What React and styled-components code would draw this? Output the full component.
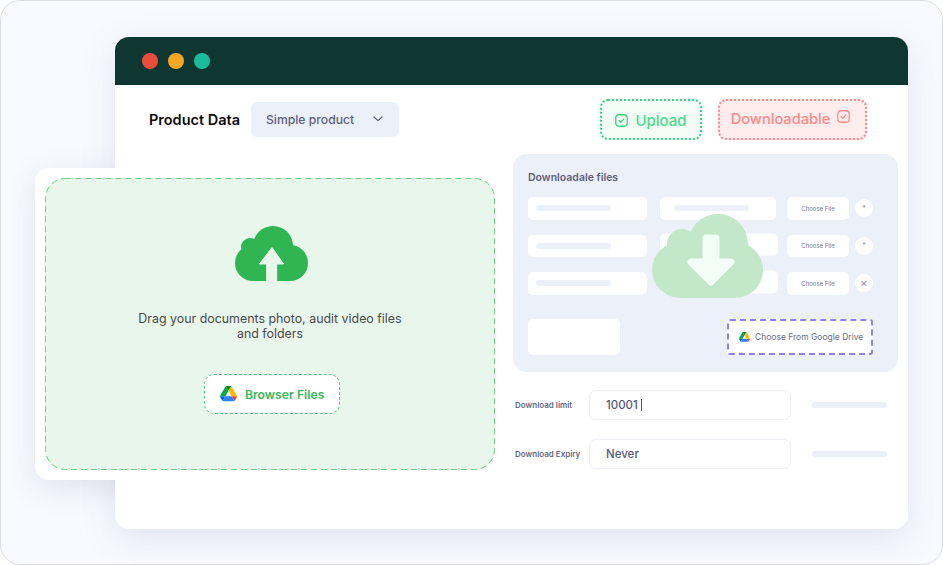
import React from "react";
import styled, { createGlobalStyle } from "styled-components";

const GlobalStyle = createGlobalStyle`
  html, body {
    margin: 0;
    padding: 0;
    background: #ffffff;
    overflow: hidden;
  }
  * {
    box-sizing: border-box;
  }
`;

function DriveIcon({ size }) {
  return (
    <svg width={size} viewBox="0 0 87.3 78" style={{ flexShrink: 0 }}>
      <path d="m6.6 66.85 3.85 6.65c.8 1.4 1.95 2.5 3.3 3.3l13.75-23.8h-27.5c0 1.55.4 3.1 1.2 4.5z" fill="#0066da" />
      <path d="m43.65 25-13.75-23.8c-1.35.8-2.5 1.9-3.3 3.3l-25.4 44a9.06 9.06 0 0 0 -1.2 4.5h27.5z" fill="#00ac47" />
      <path d="m73.55 76.8c1.35-.8 2.5-1.9 3.3-3.3l1.6-2.75 7.65-13.25c.8-1.4 1.2-2.95 1.2-4.5h-27.502l5.852 11.5z" fill="#ea4335" />
      <path d="m43.65 25 13.75-23.8c-1.35-.8-2.9-1.2-4.5-1.2h-18.5c-1.6 0-3.15.45-4.5 1.2z" fill="#00832d" />
      <path d="m59.8 53h-32.3l-13.75 23.8c1.35.8 2.9 1.2 4.5 1.2h50.8c1.6 0 3.15-.45 4.5-1.2z" fill="#2684fc" />
      <path d="m73.4 26.5-12.7-22c-.8-1.4-1.95-2.5-3.3-3.3l-13.75 23.8 16.15 28h27.45c0-1.55-.4-3.1-1.2-4.5z" fill="#ffba00" />
    </svg>
  );
}

function CheckBox({ color, raised }) {
  return (
    <svg
      width="13"
      height="13"
      viewBox="0 0 13 13"
      fill="none"
      style={{ flexShrink: 0, marginTop: raised ? -5 : 0 }}
    >
      <rect x="0.75" y="0.75" width="11.5" height="11.5" rx="3.2" stroke={color} strokeWidth="1.3" />
      <path d="M4 6.7l1.8 1.7L9 4.9" stroke={color} strokeWidth="1.2" strokeLinecap="round" strokeLinejoin="round" />
    </svg>
  );
}

function UploadCloud() {
  return (
    <svg width="73" height="55" viewBox="0 0 73 55" style={{ display: "block", marginLeft: 3 }}>
      <g fill="#2fb551">
        <circle cx="38" cy="20" r="20" />
        <circle cx="15" cy="21" r="9" />
        <circle cx="18" cy="37" r="18" />
        <circle cx="55" cy="37" r="18" />
        <rect x="18" y="20" width="37" height="35" />
      </g>
      <path d="M37 21.5L48.5 38H41.7V55H31.7V38H24.5Z" fill="#e9f6ec" stroke="#e9f6ec" strokeWidth="1" strokeLinejoin="round" />
    </svg>
  );
}

function DownloadCloud() {
  return (
    <svg width="111" height="84" viewBox="0 0 111 84" style={{ display: "block" }}>
      <g fill="#c2e7c9">
        <circle cx="66" cy="30" r="30" />
        <circle cx="30" cy="30" r="15" />
        <circle cx="28" cy="56" r="28" />
        <circle cx="83" cy="56" r="28" />
        <rect x="28" y="28" width="55" height="56" />
      </g>
      <path
        d="M54 24h10v24h15L59 68 39 48h15z"
        fill="#f3fcf6"
        stroke="#f3fcf6"
        strokeWidth="7"
        strokeLinejoin="round"
      />
    </svg>
  );
}

const rows = [
  { mark: "*" },
  { mark: "*", shifted: true },
  { mark: "×", shifted: true },
];

export default function App() {
  return (
    <>
      <GlobalStyle />
      <Frame>
        <Window>
          <TitleBar>
            <Dot $color="#ea4c3e" />
            <Dot $color="#f5a623" />
            <Dot $color="#1abc9c" />
          </TitleBar>
          <Body>
            <Toolbar>
              <ProductLabel>Product Data</ProductLabel>
              <Select>
                Simple product
                <svg width="10" height="6" viewBox="0 0 10 6" fill="none">
                  <path d="M1 1l4 3.6L9 1" stroke="#5e607c" strokeWidth="1.2" strokeLinecap="round" strokeLinejoin="round" />
                </svg>
              </Select>
              <Badges>
                <UploadBadge>
                  <CheckBox color="#3ed07f" />
                  Upload
                </UploadBadge>
                <DownloadBadge>
                  Downloadable
                  <CheckBox color="#ff8a8a" raised />
                </DownloadBadge>
              </Badges>
            </Toolbar>

            <Panel>
              <PanelTitle>Downloadale files</PanelTitle>
              <FileRows>
                {rows.map((row, i) => (
                  <FileRow key={i}>
                    <FileInput>
                      <Skeleton />
                    </FileInput>
                    <MiddleInput $shifted={row.shifted}>
                      <Skeleton />
                    </MiddleInput>
                    <ChooseFile>Choose File</ChooseFile>
                    <RoundButton $large={row.mark === "×"}>{row.mark}</RoundButton>
                  </FileRow>
                ))}
              </FileRows>
              <PanelFooter>
                <BlankCard />
                <DriveButton>
                  <DriveIcon size={11} />
                  Choose From Google Drive
                </DriveButton>
              </PanelFooter>
              <CloudOverlay>
                <DownloadCloud />
              </CloudOverlay>
            </Panel>

            <Fields>
              <FieldLabel>Download limit</FieldLabel>
              <FieldInput>
                10001
                <Caret />
              </FieldInput>
              <FieldBar />
              <FieldLabel>Download Expiry</FieldLabel>
              <FieldInput>Never</FieldInput>
              <FieldBar />
            </Fields>
          </Body>
        </Window>

        <DropCard>
          <DropZone>
            <DashedOutline width="450" height="292" viewBox="0 0 450 292" fill="none">
              <rect x="0.5" y="0.5" width="449" height="291" rx="20" stroke="#6fcf86" strokeWidth="1" strokeDasharray="6 4" />
            </DashedOutline>
            <UploadCloud />
            <DropText>
              Drag your documents photo, audit video files
              <br />
              and folders
            </DropText>
            <BrowseButton>
              <DriveIcon size={17} />
              Browser Files
            </BrowseButton>
          </DropZone>
        </DropCard>
      </Frame>
    </>
  );
}

const Frame = styled.div`
  position: relative;
  width: 943px;
  height: 565px;
  padding: 36px 34px 35px 114px;
  background: #f9faff;
  border: 1px solid #dcdfe6;
  border-radius: 20px;
  font-family: "Inter", "Liberation Sans", sans-serif;
`;

const Window = styled.div`
  width: 793px;
  height: 492px;
  background: #ffffff;
  border-radius: 14px;
  box-shadow: 0 10px 36px rgba(70, 80, 120, 0.13);
  overflow: hidden;
  display: flex;
  flex-direction: column;
`;

const TitleBar = styled.div`
  height: 48px;
  background: #0d3730;
  display: flex;
  align-items: center;
  gap: 10px;
  padding-left: 27px;
  flex-shrink: 0;
`;

const Dot = styled.span`
  width: 16px;
  height: 16px;
  border-radius: 50%;
  background: ${(p) => p.$color};
`;

const Body = styled.div`
  flex: 1;
  display: flex;
  flex-direction: column;
  padding: 14px 10px 0 34px;
`;

const Toolbar = styled.div`
  display: flex;
  align-items: center;
  height: 41px;
  padding-right: 31px;
`;

const ProductLabel = styled.div`
  font-size: 14.5px;
  font-weight: 600;
  color: #0b0b0f;
  width: 102px;
  white-space: nowrap;
`;

const Select = styled.div`
  width: 148px;
  height: 35px;
  margin-top: -1px;
  background: #ecf0f9;
  border-radius: 6px;
  display: flex;
  align-items: center;
  justify-content: space-between;
  padding: 0 16px 0 15px;
  font-size: 12.2px;
  font-weight: 500;
  color: #5e607c;
`;

const Badges = styled.div`
  margin-left: auto;
  display: flex;
  gap: 16px;
`;

const Badge = styled.div`
  height: 41px;
  display: flex;
  align-items: center;
  border-radius: 8px;
  font-weight: 500;
  white-space: nowrap;
`;

const UploadBadge = styled(Badge)`
  width: 102px;
  justify-content: center;
  gap: 7px;
  font-size: 15px;
  color: #4fd98c;
  background: #f3fcf6;
  border: 2px dotted #35d67d;
  padding-top: 1px;
`;

const DownloadBadge = styled(Badge)`
  width: 149px;
  justify-content: center;
  gap: 7px;
  font-size: 14.6px;
  color: #ff8a8a;
  background: #ffecec;
  border: 2px dotted #ff8585;
  padding-bottom: 1px;
  padding-right: 4px;
`;

const Panel = styled.div`
  position: relative;
  align-self: flex-end;
  width: 385px;
  height: 218px;
  margin-top: 14px;
  padding: 18px 25px 0 15px;
  background: #ecf0f9;
  border-radius: 14px;
`;

const PanelTitle = styled.div`
  font-size: 10.5px;
  line-height: 12px;
  font-weight: 600;
  color: #5e607c;
`;

const FileRows = styled.div`
  display: flex;
  flex-direction: column;
  gap: 15px;
  margin-top: 13px;
`;

const FileRow = styled.div`
  display: grid;
  grid-template-columns: 119px 114px 62px 18px;
  column-gap: 13px;
  height: 22.5px;
  align-items: center;
`;

const FileInput = styled.div`
  height: 22.5px;
  background: #ffffff;
  border-radius: 5px;
  display: flex;
  align-items: center;
  padding-left: 8px;
`;

const MiddleInput = styled(FileInput)`
  width: ${(p) => (p.$shifted ? "118px" : "116px")};
  transform: ${(p) => (p.$shifted ? "translateY(-1.5px)" : "none")};
  padding-left: 14px;
`;

const Skeleton = styled.span`
  width: 75px;
  height: 6px;
  border-radius: 3px;
  background: #ecf0f9;
`;

const ChooseFile = styled.div`
  height: 22.5px;
  background: #ffffff;
  border-radius: 5px;
  display: flex;
  align-items: center;
  justify-content: center;
  font-size: 6px;
  color: #77798f;
`;

const RoundButton = styled.div`
  width: 18px;
  height: 18px;
  margin-left: -7px;
  border-radius: 50%;
  background: #ffffff;
  display: flex;
  align-items: center;
  justify-content: center;
  font-size: ${(p) => (p.$large ? "11px" : "7px")};
  color: #8f91a6;
`;

const PanelFooter = styled.div`
  display: flex;
  justify-content: space-between;
  margin-top: 24.5px;
`;

const BlankCard = styled.div`
  width: 92px;
  height: 36px;
  background: #ffffff;
  border-radius: 5px;
`;

const DriveButton = styled.div`
  width: 146px;
  height: 36px;
  background: #ffffff;
  border: 2px dashed #8c80f3;
  border-radius: 3px;
  display: flex;
  align-items: center;
  gap: 5px;
  padding-left: 10px;
  font-size: 8.5px;
  color: #6b6d85;
  white-space: nowrap;
`;

const CloudOverlay = styled.div`
  position: absolute;
  left: 139px;
  top: 60px;
`;

const Fields = styled.div`
  display: grid;
  grid-template-columns: 74px 202px 75px;
  row-gap: 19px;
  grid-auto-rows: 30px;
  align-items: center;
  margin: 18px 0 0 366px;
`;

const FieldLabel = styled.div`
  font-size: 8px;
  font-weight: 600;
  color: #65677f;
  white-space: nowrap;
`;

const FieldInput = styled.div`
  height: 30px;
  border: 1px solid #eef0f9;
  border-radius: 7px;
  display: flex;
  align-items: center;
  padding-left: 16px;
  font-size: 11.5px;
  font-weight: 500;
  color: #55587a;
`;

const Caret = styled.span`
  width: 1px;
  height: 12px;
  margin-left: 3px;
  background: #55587a;
`;

const FieldBar = styled.div`
  height: 6px;
  margin-left: 21px;
  width: 75px;
  border-radius: 3px;
  background: #ecf0f9;
`;

const DropCard = styled.div`
  position: absolute;
  left: 34px;
  top: 167px;
  width: 470px;
  height: 312px;
  padding: 10px;
  background: #ffffff;
  border-radius: 14px;
  isolation: isolate;

  /* shadow only falls on the backdrop, the window stays clean */
  &::before {
    content: "";
    position: absolute;
    inset: 0;
    z-index: -1;
    border-radius: 14px;
    box-shadow: 0 8px 30px rgba(70, 80, 120, 0.14);
    clip-path: inset(-50px 390px -50px -50px);
  }
`;

const DropZone = styled.div`
  position: relative;
  width: 450px;
  height: 292px;
  background: #e9f6ec;
  border-radius: 20px;
  display: flex;
  flex-direction: column;
  align-items: center;
  padding-top: 48px;
`;

const DashedOutline = styled.svg`
  position: absolute;
  inset: 0;
`;

const DropText = styled.div`
  margin-top: 30px;
  font-size: 12.4px;
  line-height: 15px;
  text-align: center;
  color: #4a4a4a;
`;

const BrowseButton = styled.div`
  margin-top: 33px;
  margin-left: 4px;
  width: 136px;
  height: 40px;
  background: #ffffff;
  border: 1px dashed #57c977;
  border-radius: 10px;
  display: flex;
  align-items: center;
  gap: 8px;
  padding-left: 15px;
  font-size: 12.2px;
  font-weight: 600;
  color: #39b85a;
  white-space: nowrap;
`;
